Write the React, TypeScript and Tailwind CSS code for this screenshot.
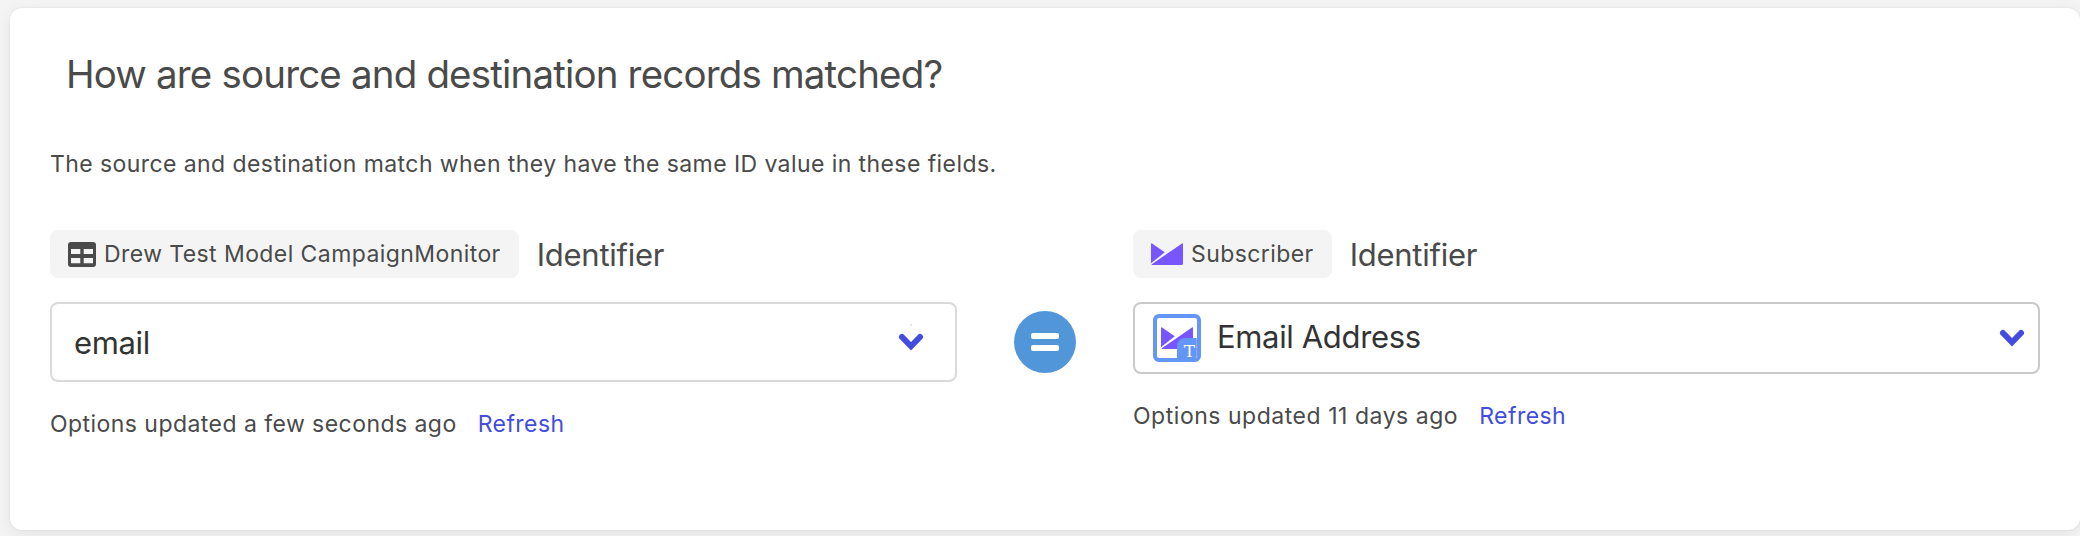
import type { ReactNode } from "react";

function TableIcon() {
  return (
    <svg className="block h-[25px] w-7 shrink-0" viewBox="0 0 28 25" fill="#4a4a4a">
      <path
        fillRule="evenodd"
        d="M3 0h22a3 3 0 0 1 3 3v19a3 3 0 0 1-3 3H3a3 3 0 0 1-3-3V3a3 3 0 0 1 3-3ZM3 7v5h9.300V7ZM15.700 7v5H25V7ZM3 16v5.200h9.300V16ZM15.700 16v5.200H25V16Z"
      />
    </svg>
  );
}

function EnvelopeLogo() {
  return (
    <svg className="block h-[22px] w-8 shrink-0" viewBox="0 0 32 22" fill="#7856ff">
      <path d="M0 1.200Q0 0 1 .5L13.800 9.300 0 20.200Z" />
      <path d="M31 .5Q32 0 32 1.200V20.500Q32 22 30.500 22H1.200Q.2 22 .8 21.200Z" />
    </svg>
  );
}

function Chevron({ tipped = false }: { tipped?: boolean }) {
  return (
    <svg className="block h-[18px] w-[26px] shrink-0 overflow-visible" viewBox="0 0 26 18" fill="none">
      {tipped && (
        <>
          <path d="M4.500 .5 13-8 21.500 .5" stroke="#f4f4fe" strokeWidth="0.5" />
          <path d="M12-8h2" stroke="#c4c6f4" strokeWidth="1" />
        </>
      )}
      <path d="M4 4 13 13.300 22 4" stroke="#444ce0" strokeWidth="6" strokeLinecap="round" />
    </svg>
  );
}

function Chip({ icon, children }: { icon: ReactNode; children: ReactNode }) {
  return (
    <div className="flex h-12 items-center gap-2 rounded-lg bg-[#f4f4f4] px-[18px] text-[23px] tracking-[0.42px]">
      {icon}
      <span>{children}</span>
    </div>
  );
}

function Label() {
  return <span className="pt-0.5 text-[31px] leading-10 tracking-[-0.25px]">Identifier</span>;
}

function Status({ children }: { children: ReactNode }) {
  return (
    <div className="flex gap-[21px] text-[23px] leading-8 tracking-[0.45px]">
      <span>{children}</span>
      <a className="text-[#444ce0]">Refresh</a>
    </div>
  );
}

export default function App() {
  return (
    <div className="h-[536px] w-full overflow-hidden bg-[#f4f4f4] pt-2 pl-2.5 font-['Inter',sans-serif] whitespace-nowrap text-[#4a4a4a]">
      <main className="h-[522px] rounded-xl bg-white pt-10 pl-10 shadow-[0_0_2px_rgba(0,0,0,0.1),0_4px_16px_rgba(0,0,0,0.07)]">
        <h1 className="pl-4 text-[38.5px] leading-[52px] tracking-[-0.83px]">
          How are source and destination records matched?
        </h1>
        <p className="mt-12 text-[23px] leading-8 tracking-[0.42px]">
          The source and destination match when they have the same ID value in these fields.
        </p>
        <div className="mt-[50px] flex">
          <section className="w-[907px]">
            <div className="flex h-12 items-center gap-[18px]">
              <Chip icon={<TableIcon />}>Drew Test Model CampaignMonitor</Chip>
              <Label />
            </div>
            <div className="mt-6 mb-[26px] flex h-20 items-center justify-between rounded-lg border-2 border-[#dadada] pr-[31px] pl-[22px] text-[31px] tracking-[-0.35px] text-[#333]">
              <span className="pt-0.5">email</span>
              <Chevron tipped />
            </div>
            <Status>Options updated a few seconds ago</Status>
          </section>
          <div className="mx-[57px] mt-[81px] flex size-[62px] shrink-0 flex-col items-center justify-center gap-1.5 rounded-full bg-[#5096d8]">
            <span className="h-1.5 w-7 rounded-xs bg-white" />
            <span className="h-1.5 w-7 rounded-xs bg-white" />
          </div>
          <section className="w-[907px]">
            <div className="flex h-12 items-center gap-[18px]">
              <Chip icon={<EnvelopeLogo />}>Subscriber</Chip>
              <Label />
            </div>
            <div className="mt-6 mb-[26px] flex h-[72px] items-center rounded-lg border-2 border-[#cacaca] pr-[13px] pl-[18px] text-[31px] text-[#333]">
              <div className="relative flex size-12 items-center justify-center overflow-hidden rounded-md border-4 border-[#6496f5]">
                <EnvelopeLogo />
                <span className="absolute right-0 -bottom-1 flex h-6 w-5 items-center justify-end rounded-tl-lg border-r border-[#86acf7] bg-[#6496f5] pt-0.5 pr-px font-['DejaVu_Serif',serif] text-[17px] leading-none text-white">
                  T
                </span>
              </div>
              <span className="ml-4 flex-1 pb-0.5 leading-10 tracking-[-0.35px]">Email Address</span>
              <Chevron />
            </div>
            <Status>
              <span className="tracking-[0.53px]">Options updated 11 days ago</span>
            </Status>
          </section>
        </div>
      </main>
    </div>
  );
}
